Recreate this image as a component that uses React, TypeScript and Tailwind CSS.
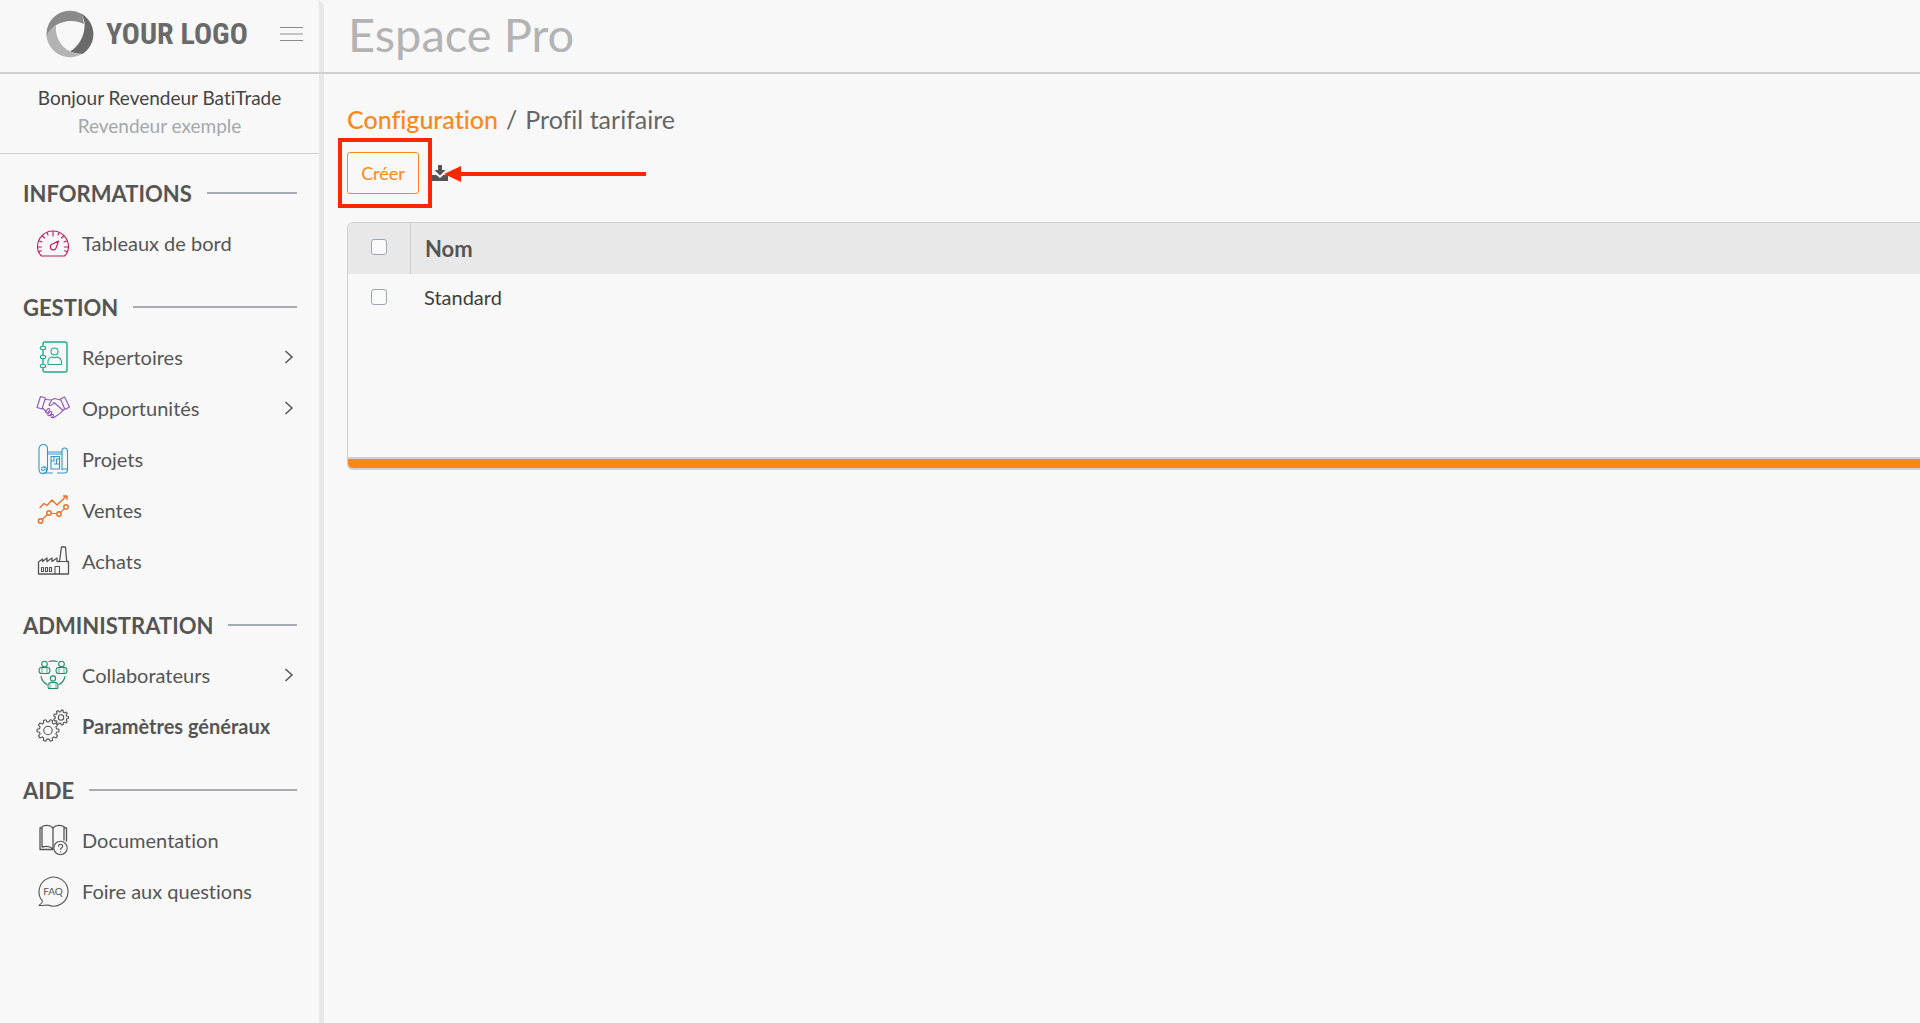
import React from "react";

const Svg = ({ color, children }: { color: string; children: React.ReactNode }) => (
  <svg
    width="34"
    height="34"
    viewBox="0 0 34 34"
    fill="none"
    stroke={color}
    strokeWidth="1.1"
    strokeLinecap="round"
    strokeLinejoin="round"
    className="shrink-0"
    aria-hidden="true"
  >
    {children}
  </svg>
);

// closed outline of a cog: teeth alternate between the two radii
const gearPath = (cx: number, cy: number, outer: number, inner: number, teeth: number) => {
  const points: string[] = [];
  const step = (Math.PI * 2) / teeth;
  for (let i = 0; i < teeth; i++) {
    const a = i * step;
    [
      [a - step * 0.32, inner],
      [a - step * 0.18, outer],
      [a + step * 0.18, outer],
      [a + step * 0.32, inner],
    ].forEach(([angle, r]) => {
      points.push(`${(cx + r * Math.cos(angle)).toFixed(2)} ${(cy + r * Math.sin(angle)).toFixed(2)}`);
    });
  }
  return `M${points.join("L")}Z`;
};

const DashboardIcon = () => (
  <Svg color="#c2185b">
    <path d="M5.500 30C2.900 27.500 1.500 24.500 1.500 20.500A15.500 15.500 0 0 1 32.500 20.500C32.500 24.500 31.200 27.500 28.500 30Z" />
    <path d="M17 5.500v4.500M2 21h3.500M28.500 21H32M6.500 10l2 2M27.500 10l-2 2M11 6.500l1 2.500M23 6.500l-1 2.500M3.500 15l2.500 1M30.500 15l-2.500 1M3 25.500l2.500-.7M31 25.500l-2.500-.7" />
    <path d="M22.500 15l-2.200 6.200a3 3 0 1 1-3.800-3.200Z" />
  </Svg>
);

const DirectoryIcon = () => (
  <Svg color="#1fab89">
    <path d="M7 6V4a2 2 0 0 1 2-2h20a2 2 0 0 1 2 2v26a2 2 0 0 1-2 2H9a2 2 0 0 1-2-2v-2M7 10v5M7 19v5" strokeWidth="1.400" />
    <ellipse cx="7" cy="8" rx="2.700" ry="1.700" />
    <ellipse cx="7" cy="17" rx="2.700" ry="1.700" />
    <ellipse cx="7" cy="26" rx="2.700" ry="1.700" />
    <circle cx="18.500" cy="11.500" r="3.500" />
    <path d="M12 24.500v-2.500c0-3 2-4.500 4-5 1.500.800 3.500.800 5 0 2 .5 4.500 2 4.500 5v2.500Z" />
  </Svg>
);

const HandshakeIcon = () => (
  <Svg color="#8e54b5">
    <path d="M4.500 5.500l5 1.500L6 18l-5-1.500ZM28.500 6L24.500 8 29 18.500l4.500-2.500Z" />
    <path d="M9.500 8.500l6 .5 3-1.500 6 1.500M6.500 17l3.500 3.500M28 18c-1 2-4.500 5-8.500 7.500-1.500 1.300-3 1.500-4 .8" />
    <path d="M15.500 9.500l-2.500 4.500c1.500 1.200 3.500 0 5-2.500l8.500 7.500" />
    <path d="M10 20l2-2.300c1.500-.5 2.200.8 1.500 1.800l-2 2.500c-1.500.5-2.300-.8-1.500-2ZM12 23l2.200-2.500c1.500-.3 2 .8 1.300 1.800l-2 2.300c-1.300.5-2.200-.4-1.500-1.600ZM14.500 25l1.600-1.800c1.300 0 1.700 1 1 1.900l-1.300 1.400" />
  </Svg>
);

const ProjectIcon = () => (
  <Svg color="#3796c8">
    <path d="M3 27V7c0-6 8.500-6 8.500 0v19M3 27c0 6 7.500 6 7.500 1 0-4-5-4-5-1 0 2 3 2 3 0M11.500 26c0 3-1 5-4 5h9M12 10h13.500M12 12h13.500" />
    <path d="M26 28V9c0-4 5.500-4 5.500 0v18c0 3-1 4-3 4h-7M26 27h5" />
    <path d="M15 14.500h8.500V27H15ZM18 14.500v4.500h-3M20.500 17h3M18.500 22h4.500M20.500 17v5" />
  </Svg>
);

const SalesIcon = () => (
  <Svg color="#e8702a">
    <path d="M4 14.500l4-4 3 2 5-5.500 5 5L30 3.500M27.500 3h3.500v3.500" strokeWidth="1.400" />
    <circle cx="4.500" cy="28" r="2.200" strokeWidth="1.400" />
    <circle cx="13" cy="20" r="2.200" strokeWidth="1.400" />
    <circle cx="23" cy="21" r="2.200" strokeWidth="1.400" />
    <circle cx="30" cy="14" r="2.200" strokeWidth="1.400" />
    <path d="M6.200 26.500l5.200-5M15.200 20.200l5.500.6M24.600 19.400l3.800-3.800" />
  </Svg>
);

const FactoryIcon = () => (
  <Svg color="#555555">
    <path d="M2.500 30V18l4-3v2.500l4.500-3.500v3.500l5-3.500v3.500l5-3.500v3.500h2.500L25.500 3h4l1.200 14.500H32.500V30Z" strokeWidth="1.300" />
    <path d="M24 17.500h7M5.500 23.500h2v4h-2ZM9.500 23.500h2v4h-2ZM13.500 23.500h2v4h-2ZM19 30v-7.500h4.500V30" />
  </Svg>
);

const TeamIcon = () => (
  <Svg color="#1f8f68">
    <circle cx="8.500" cy="6" r="2.800" />
    <circle cx="25.500" cy="6" r="2.800" />
    <circle cx="17" cy="20.500" r="2.600" />
    <path d="M5 15.500c-2.600-.5-2.600-5.500 0-6h7c2.600.5 2.600 5.500 0 6ZM22 15.500c-2.600-.5-2.600-5.500 0-6h7c2.600.5 2.600 5.500 0 6Z" />
    <path d="M6 9.500v6M11 9.500v6M23 9.500v6M28 9.500v6M14 24.500v6M20 24.500v6" strokeWidth="0.700" />
    <path d="M12.500 30.500c-1.500-3 0-6 2-6h5c2 0 3.500 3 2 6Z" />
    <path d="M13 3.500c2.500-.8 5.500-.8 8 0M5 18.500c1 4 3 6.500 6 8M29 18.500c-1 4-3 6.500-6 8" />
  </Svg>
);

const SettingsIcon = () => (
  <Svg color="#555555">
    <path d={gearPath(12, 21.5, 11, 8.7, 10)} />
    <circle cx="12" cy="21.500" r="4.200" />
    <path d={gearPath(25, 8.5, 7.5, 5.8, 9)} />
    <circle cx="25" cy="8.500" r="2.700" />
  </Svg>
);

const DocumentationIcon = () => (
  <Svg color="#555555">
    <path d="M17 5c-2.500-3-7-3-11-1.500v20.500c4-1 8.500-.5 11 2M17 5c2.500-3 7-3 11-1.500V17M17 5v21M6 5H4v21.500h13M28 5h2.500v13" strokeWidth="1.300" />
    <circle cx="24.500" cy="25" r="6.700" fill="#f8f8f8" />
    <path d="M22.500 23.300c0-2.800 4.200-2.600 4.200 0 0 1.500-2.100 1.500-2.100 3.200M24.600 28.800v.2" />
  </Svg>
);

const FaqIcon = () => (
  <Svg color="#555555">
    <path d="M6.500 27A14.500 14.500 0 1 1 12 31c-3 0-5 .8-9 .5 2-1.500 3.300-2.500 3.500-4.500Z" />
    <text x="17" y="20.500" textAnchor="middle" fontSize="10" fill="#555555" stroke="none" fontFamily="Lato, sans-serif">
      FAQ
    </text>
  </Svg>
);

const LogoMark = () => (
  <svg width="48" height="48" viewBox="0 0 48 48" className="shrink-0" aria-hidden="true">
    <path d="M.5 26A23.500 23.500 0 0 1 36 4l2 10C29 9.500 18 10 9.500 15.500 6 18 2.500 22 .5 26Z" fill="#8a8a8a" />
    <path d="M35 3.500A23.500 23.500 0 0 1 36.500 44C32 44 28 43 24 41.500 33 36 39.500 25 38.500 13 38 9 36.500 6 35 3.500Z" fill="#6a6a6a" />
    <path d="M.5 26C2.500 21 6 17.500 10 15.500 9 26 14 36 24 41.500 28 43.500 32 44 36.500 43.500A23.500 23.500 0 0 1 .5 26Z" fill="#b3b3b3" />
  </svg>
);

const sections = [
  {
    title: "INFORMATIONS",
    items: [{ label: "Tableaux de bord", icon: DashboardIcon }],
  },
  {
    title: "GESTION",
    items: [
      { label: "Répertoires", icon: DirectoryIcon, more: true },
      { label: "Opportunités", icon: HandshakeIcon, more: true },
      { label: "Projets", icon: ProjectIcon },
      { label: "Ventes", icon: SalesIcon },
      { label: "Achats", icon: FactoryIcon },
    ],
  },
  {
    title: "ADMINISTRATION",
    items: [
      { label: "Collaborateurs", icon: TeamIcon, more: true },
      { label: "Paramètres généraux", icon: SettingsIcon, active: true },
    ],
  },
  {
    title: "AIDE",
    items: [
      { label: "Documentation", icon: DocumentationIcon },
      { label: "Foire aux questions", icon: FaqIcon },
    ],
  },
];

const Sidebar = () => (
  <aside className="w-[324px] shrink-0 border-r-[5px] border-[#e8e8e8] rounded-tr-lg">
    <div className="h-[74px] -mr-[5px] pl-[46px] pr-[21px] pb-1 flex items-center border-b-2 border-[#d0d0d0]">
      <a href="#" className="flex items-center gap-3 mr-auto">
        <LogoMark />
        <span className="font-['Liberation_Sans_Narrow','Roboto_Condensed','Roboto',sans-serif] font-bold text-[30px] leading-8 text-[#6a6a6a] whitespace-nowrap">
          YOUR LOGO
        </span>
      </a>
      <button type="button" aria-label="Menu" className="w-[23px] flex flex-col gap-[5px]">
        <span className="h-px w-full bg-[#8a8a8a]" />
        <span className="h-0.5 w-full bg-[#c4c4c4]" />
        <span className="h-px w-full bg-[#8a8a8a]" />
      </button>
    </div>
    <div className="h-20 pb-1 flex flex-col items-center justify-center border-b border-[#d0d0d0] text-[19px] leading-7">
      <p className="text-[#444444]">Bonjour Revendeur BatiTrade</p>
      <p className="text-[#a3a8ac]">Revendeur exemple</p>
    </div>
    <nav className="pt-[15px] pl-[23px] pr-[22px] text-[#555555]">
      {sections.map((section) => (
        <section key={section.title} className="pb-[15px]">
          <h2 className="h-12 flex items-center gap-[15px] text-[22px] font-bold">
            {section.title}
            <span className="h-0.5 flex-1 bg-[#a5abb0]" />
          </h2>
          <ul>
            {section.items.map(({ label, icon: Icon, more, active }: any) => (
              <li key={label}>
                <a href="#" className="h-[51px] pl-[13px] flex items-center gap-3 text-xl">
                  <Icon />
                  <span className={active ? "font-bold" : ""}>{label}</span>
                  {more && (
                    <svg width="10" height="14" viewBox="0 0 10 14" fill="none" stroke="#555555" strokeWidth="1.500" className="ml-auto mr-[3px]" aria-hidden="true">
                      <path d="M1.500 1l6.500 6-6.500 6" />
                    </svg>
                  )}
                </a>
              </li>
            ))}
          </ul>
        </section>
      ))}
    </nav>
  </aside>
);

const checkbox =
  "block mx-auto size-4 appearance-none rounded-[3px] border border-[#9fa5aa] bg-[#fafafa] checked:bg-[#ff8717]";

const App = () => {
  return (
    <div className="min-h-screen flex overflow-hidden bg-[#f8f8f8] font-['Lato',sans-serif] [font-variant-ligatures:none]">
      <Sidebar />
      <main className="flex-1 min-w-0">
        <header className="h-[74px] pl-6 pb-1 flex items-center border-b-2 border-[#d0d0d0]">
          <h1 className="text-[47px] leading-none text-[#b3b3b3]">Espace Pro</h1>
        </header>
        <div className="pl-[23px] pt-[27px]">
          <nav className="flex gap-2 text-[25px] leading-9 text-[#666666]">
            <a href="#" className="text-[#ff8717] font-medium">
              Configuration
            </a>
            <span>/</span>
            <span>Profil tarifaire</span>
          </nav>
          <div className="mt-[15px] flex items-center gap-[13px]">
            <div className="relative">
              <button type="button" className="block h-[42px] w-[72px] rounded-[3px] border border-[#ff8717] text-lg text-[#ff8717]">
                Créer
              </button>
              {/* highlight frame round the button */}
              <div className="absolute -left-[9px] -top-[14px] h-[70px] w-[94px] border-4 border-[#ff2600] pointer-events-none" />
            </div>
            <div className="relative">
              <button type="button" aria-label="Télécharger" className="block">
                <svg width="16" height="16" viewBox="0 0 16 16" fill="#555555" aria-hidden="true">
                  <path d="M6 0h4v5h3.500L8 10.500 2.500 5H6Z" />
                  <path d="M0 10h4.500L8 13l3.500-3H16v6H0Z" />
                </svg>
              </button>
              <svg width="203" height="16" viewBox="0 0 203 16" fill="#ff2600" className="absolute left-3 top-px" aria-hidden="true">
                <path d="M0 8L17 0v6h185v4H17v6Z" />
              </svg>
            </div>
          </div>
          <div className="mt-7 rounded-l-md border border-r-0 border-[#d0d0d0] border-b-2 overflow-hidden">
            <div className="h-[236px] border-b-2 border-[#d0d0d0]">
              <table className="w-full border-separate border-spacing-0 text-left">
                <thead>
                  <tr className="h-[51px] bg-[#e8e8e8]">
                    <th className="w-[63px] p-0 pb-1 border-r border-[#d0d0d0]">
                      <input type="checkbox" aria-label="Tout sélectionner" className={checkbox} />
                    </th>
                    <th className="p-0 pl-[14px] text-[22px] font-bold text-[#555555]">Nom</th>
                  </tr>
                </thead>
                <tbody>
                  <tr className="h-[45px]">
                    <td className="p-0 pr-px">
                      <input id="row-standard" type="checkbox" className={checkbox} />
                    </td>
                    <td className="p-0 pl-[13px] text-xl text-[#3f3f3f]">
                      <label htmlFor="row-standard">Standard</label>
                    </td>
                  </tr>
                </tbody>
              </table>
            </div>
            <div className="h-[9px] bg-[#ff8717]" />
          </div>
        </div>
      </main>
    </div>
  );
};

export default App;
